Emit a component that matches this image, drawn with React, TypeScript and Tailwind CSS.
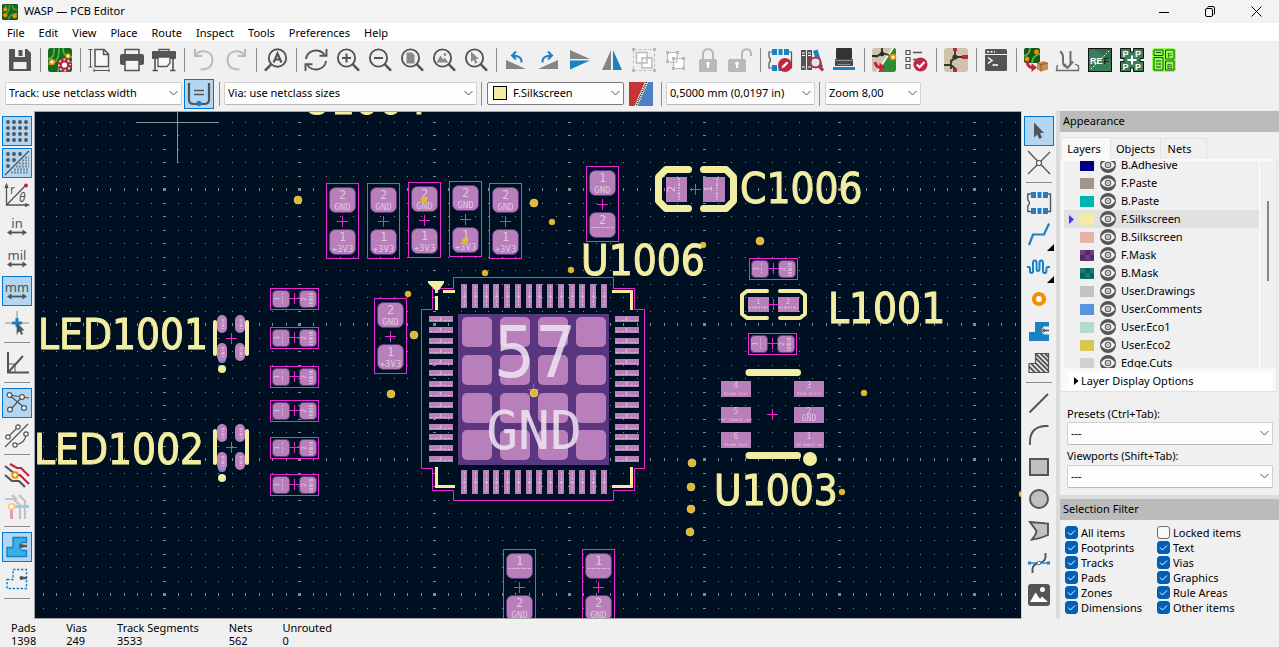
import React from "react";

const DARK = "#545454";
const BLUE = "#1a81c4";
const RED = "#bf2641";
const OFF = "#b9b9b9";

function Svg({ children, size = 24 }: { children: React.ReactNode; size?: number }) {
  return (
    <svg className="overflow-visible" width={size} height={size} viewBox={`0 0 ${size} ${size}`} fill="none" aria-hidden="true">
      {children}
    </svg>
  );
}

const lens = (
  <>
    <circle cx="10.5" cy="10" r="8.6" stroke={DARK} strokeWidth="1.9" />
    <path d="M16.6 16.2 L23 22.6" stroke={DARK} strokeWidth="2.6" />
  </>
);

const board = (
  <>
    <rect width="24" height="24" rx="2.5" fill="#17691f" />
    <path d="M0 11 C6 10 6 6 6 0 M0 16 C9 16 11 10 11 0 M24 9 C17 9 15 6 15 0 M10 24 C10 17 15 14 24 14" stroke="#4fae3e" strokeWidth="1.8" />
  </>
);

const pads6 = (
  <path d="M4 1h5v6H4z M10.5 1h4v6h-4z M16 1h5v6h-5z M4 17h5v6H4z M10.5 17h4v6h-4z M16 17h5v6h-5z" fill={BLUE} />
);

const bentArrow = (
  <path d="M3 14 Q4 19.5 8.5 19.5" stroke={RED} strokeWidth="3" />
);

const icons: Record<string, React.ReactNode> = {
  save: (
    <path fillRule="evenodd" fill={DARK} d="M1.5 1 H19 L23 5 V23 H1 V2 Q1 1 1.5 1 Z M5.5 14 V21 H18.5 V14 Z M7 1 V9 H17 V1 Z M10.5 2 H14.5 V8 H10.5 Z" />
  ),
  boardSetup: (
    <>
      {board}
      <circle cx="4" cy="14" r="2.4" fill="#fff" stroke="#f29100" strokeWidth="1.8" />
      <circle cx="20" cy="8" r="2" fill="#fff" stroke="#f29100" strokeWidth="1.6" />
      <circle cx="16.500" cy="17" r="6.600" fill="#efefef" />
      <circle cx="16.500" cy="17" r="5.400" stroke={RED} strokeWidth="2.800" strokeDasharray="2.600 1.640" />
      <circle cx="16.500" cy="17" r="3.700" stroke={RED} strokeWidth="2.200" fill="#fff" />
    </>
  ),
  page: (
    <>
      <path d="M7 1.5 H16 L20.5 6 V18.5 H7 Z M15.5 1.5 V6.5 H20.5" stroke={DARK} strokeWidth="1.5" fill="#f8f8f8" />
      <path d="M2.5 1.5 V19 M0.5 1.5 H4.5 M0.5 19 H4.5 M6 22.5 H21 M6 20.5 V24 M21 20.5 V24" stroke={DARK} />
    </>
  ),
  print: (
    <>
      <path d="M5 6 V1.5 H19 V6" stroke={DARK} strokeWidth="1.5" />
      <rect y="6" width="24" height="11" rx="2" fill={DARK} />
      <path d="M5 12 H19 V22.5 H5 Z" fill="#f4f4f4" stroke={DARK} strokeWidth="1.5" />
      <path d="M3 11.5 H21" stroke={DARK} strokeWidth="2" />
    </>
  ),
  plot: (
    <>
      <path d="M7 5 V1.5 H17 V5" stroke={DARK} strokeWidth="1.3" />
      <rect y="3" width="24" height="8" rx="1" fill={DARK} />
      <path d="M6 9 H18 V15 L15 18.5 H6 Z" fill="#f8f8f8" stroke={DARK} strokeWidth="1.3" />
      <path d="M3 11 V22 M21 11 V22 M0.5 22.5 H6 M18 22.5 H23.5" stroke={DARK} strokeWidth="1.6" />
    </>
  ),
  undo: (
    <path d="M3 1 V8 H10 M3.3 7.5 C9 0 21 3 20.5 12.500 C20 18.500 16.5 22 8.500 21.5" stroke={OFF} strokeWidth="2" />
  ),
  redo: (
    <path d="M21 1 V8 H14 M20.700 7.5 C15 0 3 3 3.5 12.500 C4 18.500 7.500 22 15.500 21.5" stroke={OFF} strokeWidth="2" />
  ),
  find: (
    <>
      <circle cx="13.5" cy="10" r="8.7" stroke={DARK} strokeWidth="1.9" />
      <path d="M7.4 16.2 L1 22.6" stroke={DARK} strokeWidth="2.6" />
      <path d="M9.6 14.5 L13.5 5.5 L17.4 14.5 M11 11.5 H16" stroke={DARK} strokeWidth="2.2" />
    </>
  ),
  refresh: (
    <path d="M2 11 C3 3 14 -1 20.5 6.5 M22.5 1 V7.8 H15.5 M22 13 C21 21 10 25 3.5 17.5 M1.5 23 V16.2 H8.5" stroke={DARK} strokeWidth="1.9" />
  ),
  zoomIn: <>{lens}<path d="M10.5 5.5 V14.5 M6 10 H15" stroke={DARK} strokeWidth="2" /></>,
  zoomOut: <>{lens}<path d="M6 10 H15" stroke={DARK} strokeWidth="2" /></>,
  zoomFit: <>{lens}<path d="M6.5 4.5 H12 L14.5 7 V15.5 H6.5 Z" fill="#8a8a8a" /></>,
  zoomObj: (
    <>
      {lens}
      <path d="M4.5 14.5 L8.5 7.5 L11 11.5 L12.5 9.5 L16.5 14.5 Z" fill="#8a8a8a" />
      <circle cx="13" cy="6.5" r="1.4" fill="#8a8a8a" />
    </>
  ),
  zoomSel: <>{lens}<path d="M7 3.5 V14 L9.6 11.8 L11.4 15.8 L13.4 14.8 L11.6 11 H15 Z" fill="#8a8a8a" /></>,
  rotL: (
    <>
      <path d="M2 12 L22 21 H2 Z" fill="#858585" />
      <path d="M17.500 14.500 Q18 7.500 8.5 7.500 M12 3.5 L8 7.5 L12 11.5" stroke={BLUE} strokeWidth="2" />
    </>
  ),
  rotR: (
    <>
      <path d="M22 12 L2 21 H22 Z" fill="#858585" />
      <path d="M6.500 14.500 Q6 7.500 15.5 7.500 M12 3.5 L16 7.5 L12 11.5" stroke={BLUE} strokeWidth="2" />
    </>
  ),
  flipV: (
    <>
      <path d="M2 2 L22 11 H2 Z" fill="#858585" />
      <path d="M2 21.5 L22 12.5 H2 Z" fill={BLUE} />
    </>
  ),
  flipH: (
    <>
      <path d="M2 22 L11 2 V22 Z" fill="#858585" />
      <path d="M22 22 L13 2 V22 Z" fill={BLUE} />
    </>
  ),
  group: (
    <>
      <rect x="1.5" y="1.5" width="21" height="21" stroke={OFF} strokeDasharray="3 2" />
      <path d="M0 0h3v3H0z M21 0h3v3h-3z M0 21h3v3H0z M21 21h3v3h-3z" fill={OFF} />
      <path d="M4.500 4.500 H15 V15 H4.500 Z M10 10 H20 V20 H10 Z" fill="#fff" stroke={OFF} strokeWidth="1.4" />
    </>
  ),
  ungroup: (
    <>
      <path d="M3.500 4.500 H13 V14 H3.500 Z M9.500 10.500 H20 V20.500 H9.500 Z" fill="#fff" stroke={OFF} strokeWidth="1.2" />
      <path d="M2 3h3v3H2z M12 3h3v3h-3z M2 12h3v3H2z M8 9h3v3H8z M18 9h3v3h-3z M8 19h3v3H8z M18 19h3v3h-3z" fill={OFF} />
    </>
  ),
  lock: (
    <>
      <path d="M7 12 V6 Q7 1.200 12 1.200 T17 6 V12" stroke={OFF} strokeWidth="2" />
      <rect x="3" y="11" width="18" height="13" rx="1.5" fill={OFF} />
      <path d="M12 14.500 V20" stroke="#fff" strokeWidth="2" />
      <circle cx="12" cy="15.500" r="1.800" fill="#fff" />
    </>
  ),
  unlock: (
    <>
      <path d="M14 12 V6 Q14 1.200 18.500 1.200 T23 6 V8" stroke={OFF} strokeWidth="2" />
      <rect x="0" y="11" width="18" height="13" rx="1.5" fill={OFF} />
      <path d="M9 14.500 V20" stroke="#fff" strokeWidth="2" />
      <circle cx="9" cy="15.500" r="1.800" fill="#fff" />
    </>
  ),
  fpEdit: (
    <>
      <path d="M4 4 H1 V9 Q4 12 1 15 V20 H4 M21 4 H23.500 V20 H21" stroke={DARK} strokeWidth="1.200" />
      {pads6}
      <circle cx="17" cy="17" r="7" fill={RED} />
      <path d="M13.500 20.500 L14.500 17.500 L19 13.500 L20.500 15 L16 19.500 Z" fill="#fff" />
    </>
  ),
  fpBrowse: (
    <>
      <path d="M1 2 H6 V22 H1 Z M7 2 H12 V22 H7 Z" fill={DARK} />
      <path d="M2 5 H5 M2 7.500 H5 M8 5 H11 M8 7.500 H11 M2 19 H5 M8 19 H11" stroke="#fff" />
      <path d="M13 3 L17.500 1.500 L23 19 L19 20.500 Z" fill={BLUE} />
      <circle cx="15.500" cy="14.500" r="5" fill="#dceaf4" stroke={RED} strokeWidth="2" />
      <path d="M19 18 L23 22.500" stroke={RED} strokeWidth="3" />
    </>
  ),
  viewer3d: (
    <>
      <rect x="4" y="0" width="16" height="11" rx="1" fill="#333" />
      <path d="M3 11 H21 V18 H3 Z" fill="#4a4a4a" />
      <path d="M3 12.500 H21 M6 16.500 H18" stroke="#8c8c8c" />
      <path d="M1 20.500 H23" stroke={BLUE} strokeWidth="3" />
    </>
  ),
  updatePcb: (
    <>
      <rect width="24" height="24" rx="3" fill="#cfc3ab" />
      <path d="M22 0 Q24 0 24 3 V21 Q24 24 21 24 H5 Z" fill="#2f8a35" />
      <path d="M21 0 L5 24" stroke="#fff" strokeWidth="1.500" />
      <path d="M10 0 V5 L4 9 M10 5 L17 7 M5 8 H0" stroke="#2a2a2a" strokeWidth="1.800" />
      <circle cx="10" cy="6" r="2.300" fill="#2a2a2a" />
      <circle cx="21" cy="9" r="2.400" fill="#fff" stroke="#f29100" strokeWidth="1.800" />
      {bentArrow}
      <path d="M7.500 14.500 L13.500 19.500 L7.500 24 Z" fill={RED} />
    </>
  ),
  drc: (
    <>
      <path d="M2 2.500 H6 V6.500 H2 Z M2 9.500 H6 V13.500 H2 Z M2 16.500 H6 V20.500 H2 Z" stroke={DARK} strokeWidth="1.200" />
      <path d="M9 4.500 H18 M9 11.500 H13" stroke={DARK} strokeWidth="1.500" />
      <circle cx="16.500" cy="16.500" r="7" fill={RED} />
      <path d="M12.800 16.500 L15.500 19.200 L20.500 14" stroke="#fff" strokeWidth="2.200" />
    </>
  ),
  schematic: (
    <>
      <rect width="24" height="24" rx="3" fill="#cfc3ab" />
      <path d="M11 0 V3 M24 9 H18 M11 20 V24" stroke={RED} strokeWidth="4" />
      <path d="M11 3 V9 M18 9 H11 M11 9.500 L7 13.500 M0 17 H7 M7 11.500 V21 M7 17 L11 20.500" stroke="#333" strokeWidth="1.800" />
      <circle cx="11" cy="9" r="2.600" fill="#333" />
    </>
  ),
  console: (
    <>
      <rect x="1" y="1" width="22" height="22" rx="1.500" fill={DARK} />
      <path d="M1 6.500 H23" stroke="#efefef" />
      <path d="M3 3.700 H5 M6.500 3.700 H8.500 M10 3.700 H11" stroke="#fff" strokeWidth="1.400" />
      <path d="M4 9.500 L8 12.500 L4 15.500 M8.500 17 H14" stroke="#fff" strokeWidth="1.500" />
    </>
  ),
  archive: (
    <>
      <rect width="16" height="15" rx="2" fill="#14561a" />
      <path d="M6 0 Q6 6 0 8 M16 6 Q9 7 8 15" stroke="#4fae3e" strokeWidth="2" />
      <circle cx="3" cy="11" r="2.400" fill="#f29100" />
      <circle cx="12.500" cy="4" r="2.400" fill="#f29100" />
      {bentArrow}
      <path d="M7.500 15 L13 19.500 L7.500 24 Z" fill={RED} />
      <path d="M13 15 L20 13 L24 15 V21.500 L17 23.500 L13 21.500 Z" fill="#c98d4e" />
      <path d="M13 15 L17 16.500 L24 15 M17 16.500 V23.500" stroke="#8d5c2a" />
    </>
  ),
  teardrop: (
    <>
      <path d="M4 3.500 Q7 5 7 9 V14 Q7.500 19 11 19 T14.500 14 V3 M8.500 16 L11.500 20 L17 13.500" stroke="#6d6d6d" strokeWidth="2" />
      <path d="M1.500 17 L0.500 22.500 H22.500 V18 L19 16" stroke="#6d6d6d" strokeWidth="1.400" />
    </>
  ),
  ref: (
    <>
      <rect x="0.500" y="0.500" width="23" height="23" fill="#3a7d5a" stroke="#111" />
      <path d="M6 1 L23 1 V12 Z" fill="#2f6b4c" />
      <path d="M3 21 L22 2" stroke="#fff" strokeDasharray="1.500 1.500" />
      <text x="2" y="16" fontSize="9" fontWeight="700" fontFamily="Liberation Sans, sans-serif" fill="#fff">RE</text>
      <text x="15.500" y="16" fontSize="9" fontWeight="700" fontFamily="Liberation Sans, sans-serif" fill="#16241c">F</text>
    </>
  ),
  pppp: (
    <>
      <path d="M0.500 0.500 H10.500 V4 H13.500 V0.500 H23.500 V10.500 H20 V13.500 H23.500 V23.500 H13.500 V20 H10.500 V23.500 H0.500 V13.500 H4 V10.500 H0.500 Z" fill="#3a7d5a" stroke="#111" />
      <path d="M12 7.500 V16.500 M7.500 12 H16.500" stroke="#fff" strokeWidth="2" />
      <g fontSize="9" fontWeight="700" fontFamily="Liberation Sans, sans-serif" fill="#fff">
        <text x="2.500" y="8.500">P</text>
        <text x="15" y="8.500">P</text>
        <text x="2.500" y="21.500">P</text>
        <text x="15" y="21.500">P</text>
      </g>
    </>
  ),
  fb: (
    <>
      <rect x="0" y="0" width="24" height="24" rx="3" fill="#8fff4f" />
      <path d="M2 2 H11 V7.500 H2 Z M2 9.500 H11 V22 H2 Z M13.500 2 H22 V11 H13.500 Z M13.500 13 H22 V22 H13.500 Z M4 4.500 H9 M4 13 H9 M4 16 H9 M4 19 H9" stroke="#24431a" />
      <g fontSize="8" fontFamily="Liberation Sans, sans-serif" fill="#24431a">
        <text x="15.500" y="9.500">F</text>
        <text x="15" y="20.500">B</text>
      </g>
    </>
  ),
  autoTrack: (
    <>
      <path d="M2 1 V18 Q2 22 7 22 H17 Q22 22 22 18 V1" stroke={DARK} strokeWidth="2.200" />
      <path d="M7 8.500 H17 M7 12.500 H17" stroke={DARK} strokeWidth="1.400" />
      <circle cx="12" cy="21.500" r="2.700" fill={BLUE} />
    </>
  ),
  layerPair: (
    <>
      <path d="M0 0 H16 L6 24 H0 Z" fill="#c83434" />
      <path d="M19 0 H24 V24 H8 Z" fill="#4d7fc4" />
      <path d="M17.500 0 L7 24" stroke="#fff" strokeWidth="3" />
      <path d="M17.500 0 L7 24" stroke="#222" strokeWidth="2" strokeDasharray="1 1" />
    </>
  ),
  grid: (
    <g fill={DARK}>
      {[3, 9, 15, 21].map((y) => [3, 9, 15, 21].map((x) => <circle key={`${x}-${y}`} cx={x} cy={y} r="1.900" />))}
    </g>
  ),
  gridOver: (
    <>
      <g fill={DARK}>
        {[[3, 3], [9, 3], [15, 3], [3, 9], [9, 9], [3, 15]].map(([x, y]) => <circle key={`${x}-${y}`} cx={x} cy={y} r="1.900" />)}
      </g>
      <path d="M0 24 L24 0" stroke={DARK} strokeWidth="1.200" />
      <path d="M20 6.500 H24 M17 9.500 H24 M14 12.500 H24 M11 15.500 H24 M9 18.500 H24 M6 21.500 H24" stroke="#7d8a96" strokeWidth="2" strokeDasharray="2 1" />
    </>
  ),
  polar: (
    <>
      <path d="M1.500 2 V22 H23 M0 5 L1.500 1.500 L3 5 M20 20.500 L23.500 22 L20 23.500 M1.500 22 L20 3" stroke={DARK} strokeWidth="1.300" />
      <circle cx="21" cy="2.500" r="2" fill={RED} />
      <text x="5" y="11" fontSize="12" fontFamily="Noto Sans, sans-serif" fill={DARK}>r</text>
      <text x="14" y="19" fontSize="12" fontStyle="italic" fontFamily="Noto Sans, sans-serif" fill={DARK}>θ</text>
    </>
  ),
  cursor: (
    <>
      <path d="M12 0 V24 M0 12 H24" stroke="#8a8a8a" />
      <path d="M12 7 V16 M7 12 H17" stroke={BLUE} strokeWidth="3" />
      <path d="M12 11.500 V22.500 L14.500 20.500 L16.500 24 L18 23 L16.500 19.500 H19.500 Z" fill={DARK} />
    </>
  ),
  angle45: (
    <>
      <path d="M3 1 V21.500 H24 M3 21.500 L18 5" stroke={DARK} strokeWidth="2" />
      <path d="M3 13 H10 V21" stroke={DARK} />
    </>
  ),
  ratsnest: (
    <>
      <path d="M4 4 L20 17 M4 4 L17 6 L24 7 M17 6 L5 19" stroke={DARK} strokeWidth="1.200" />
      <g fill="#fff" stroke={DARK} strokeWidth="1.200">
        <circle cx="4.500" cy="4" r="2.400" /><circle cx="17" cy="6" r="2.400" /><circle cx="5" cy="18.500" r="2.400" /><circle cx="19" cy="17" r="2.400" />
      </g>
    </>
  ),
  ratsCurve: (
    <>
      <path d="M0 24 L23 1 M3 14 L13 4 M10 22 Q21 20 21 11" stroke={DARK} strokeWidth="1.200" />
      <g fill="#fff" stroke={DARK} strokeWidth="1.200">
        <circle cx="3" cy="14" r="2.200" /><circle cx="13" cy="4" r="2.200" /><circle cx="10" cy="22" r="2.200" /><circle cx="21" cy="11" r="2.200" />
      </g>
    </>
  ),
  netHi: (
    <>
      <path d="M5 1 L12 5 H16 L24 13 M11 12 H15 L24 21" stroke={RED} strokeWidth="2.200" />
      <path d="M0 3 L10 11 M0 12 L7 18 H14 L20 24" stroke={DARK} strokeWidth="2.200" />
      <circle cx="10" cy="12" r="2.800" fill="#fff" stroke="#f29100" strokeWidth="2" />
    </>
  ),
  trackDim: (
    <>
      <path d="M0 4 H8 L15 10 V24 M14 0 L20 6 V24 M7 0 L12 5" stroke="#c2c2c2" strokeWidth="2.200" />
      <path d="M8 11.500 H24" stroke="#9ccbe8" strokeWidth="3" />
      <path d="M6.500 14 V24" stroke="#e3a0ac" strokeWidth="3" />
      <circle cx="6.500" cy="11.500" r="2.800" fill="#fff" stroke="#f9cf90" strokeWidth="2" />
    </>
  ),
  zoneFill: (
    <>
      <path d="M2 12.500 H8 V2.500 H21.500 V7.500 H17 A4.500 4.500 0 0 0 17 15.500 H21.500 V21.500 H2 Z" fill="#38b0ea" stroke={BLUE} strokeWidth="1.400" />
      <path d="M15 11 H22" stroke={DARK} strokeWidth="2.400" />
      <circle cx="16.500" cy="11" r="2" fill={DARK} />
    </>
  ),
  zoneLine: (
    <>
      <path d="M2 12.500 H8 V2.500 H21.500 V21.500 H2 Z" stroke={BLUE} strokeWidth="1.400" strokeDasharray="2.500 1.500" />
      <path d="M15 11 H22" stroke={DARK} strokeWidth="2.400" />
      <circle cx="16.500" cy="11" r="2" fill={DARK} />
    </>
  ),
  select: <path d="M7 3.500 V18.500 L10 15.500 L12.500 20 L15 18.500 L13 14 H17 Z" fill={DARK} />,
  localRats: (
    <>
      <path d="M1 0 L23 23 M23 1 L1 23" stroke={DARK} strokeWidth="1.300" />
      <circle cx="12" cy="12" r="2.500" fill="#fff" stroke={DARK} strokeWidth="1.200" />
    </>
  ),
  footprint: (
    <>
      <path d="M4 3 H0.800 V9 Q4 12 0.800 15 V20.500 H4 M21 3 H23.500 V20.500 H21" stroke={DARK} strokeWidth="1.400" />
      {pads6}
    </>
  ),
  route: <path d="M2 22 L6 11.500 H17 L22 0.500" stroke={BLUE} strokeWidth="2.200" />,
  tune: <path d="M0 12 H2 Q3 12 3 14 V16 Q3 18 4.500 18 T6 16 V8 Q6 5.500 7.800 5.500 T9.600 8 V14 Q9.600 16 11 16 T12.500 14 V8 Q12.500 5.500 14.200 5.500 T16 8 V16 Q16 18 17.700 18 T19.400 16 V14 Q19.400 12 21 12 H23" stroke={BLUE} strokeWidth="2" />,
  via: <circle cx="12" cy="12" r="5" fill="#fff" stroke="#f29100" strokeWidth="4.200" />,
  zone: (
    <>
      <path d="M2 13 H8 V3 H22 V7.500 H17 A4.500 4.500 0 0 0 17 15.500 H22 V22 H2 Z" fill={BLUE} />
      <path d="M16 11.500 H22" stroke={DARK} strokeWidth="1.600" />
      <circle cx="16.500" cy="11.500" r="1.500" stroke={DARK} />
    </>
  ),
  ruleArea: (
    <>
      <path d="M2 12.500 H8.500 V2.500 H21.500 V21.500 H2 Z" stroke={DARK} strokeWidth="1.200" />
      <path d="M8.500 2.500 L21.500 15.500 M13.500 2.500 L21.500 10.500 M18 2.500 L21.500 6 M8.500 7 L21.500 20 M8.500 12 L18 21.500 M4 12.500 L13 21.500 M2 15.500 L8 21.500" stroke={DARK} strokeWidth="1.800" />
    </>
  ),
  line: <path d="M2.500 21.500 L21 3" stroke={DARK} strokeWidth="1.900" />,
  arc: <path d="M3 22 V19 Q3 4 18 3 H21.500" stroke={DARK} strokeWidth="1.900" />,
  rect: <rect x="3" y="4" width="18" height="16" fill="#c0c0c0" stroke={DARK} strokeWidth="2" />,
  circle: <circle cx="12" cy="12" r="9" fill="#c0c0c0" stroke={DARK} strokeWidth="2" />,
  polygon: <path d="M3 3 L21 4.500 V16 Q12 20 5 20.500 Q9 16 9.500 12 Z" fill="#c0c0c0" stroke={DARK} strokeWidth="1.900" />,
  bezier: (
    <>
      <path d="M5.500 22 V18 Q6 13 12 12 T18.500 6 V2" stroke={DARK} strokeWidth="1.900" />
      <path d="M2 12 H22" stroke={BLUE} strokeWidth="1.400" />
      <path d="M1 10.500h3v3H1z M20 10.500h3v3h-3z" fill={BLUE} />
      <circle cx="12" cy="12" r="1.800" fill="#fff" stroke={BLUE} />
    </>
  ),
  image: (
    <>
      <rect x="1" y="1" width="22" height="22" rx="3" fill={DARK} />
      <circle cx="15.500" cy="6.500" r="2.500" fill="#fff" />
      <path d="M3 19 L8.500 9.500 L13 16 L15 13.500 L21 19 Z" fill="#fff" />
    </>
  ),
};

function unitIcon(label: string) {
  return (
    <>
      <text x="12" y="13" fontSize="13" textAnchor="middle" fontFamily="Noto Sans, sans-serif" fill={DARK}>{label}</text>
      <path d="M4 17.500 H20" stroke={DARK} strokeWidth="1.800" />
      <path d="M6.500 14.500 L2 17.500 L6.500 20.500 Z M17.500 14.500 L22 17.500 L17.500 20.500 Z" fill={DARK} />
    </>
  );
}
icons.inch = unitIcon("in");
icons.mil = unitIcon("mil");
icons.mm = unitIcon("mm");

type Tool = [string, string, boolean?];

const mainTools: (Tool | null)[] = [
  ["save", "Save"], null, ["boardSetup", "Board setup"], null,
  ["page", "Page settings"], ["print", "Print"], ["plot", "Plot"], null,
  ["undo", "Undo"], ["redo", "Redo"], null, ["find", "Find"], null,
  ["refresh", "Refresh"], ["zoomIn", "Zoom in"], ["zoomOut", "Zoom out"], ["zoomFit", "Zoom to fit"], ["zoomObj", "Zoom to objects"], ["zoomSel", "Zoom to selection"], null,
  ["rotL", "Rotate counterclockwise"], ["rotR", "Rotate clockwise"], ["flipV", "Mirror vertically"], ["flipH", "Mirror horizontally"],
  ["group", "Group"], ["ungroup", "Ungroup"], ["lock", "Lock"], ["unlock", "Unlock"], null,
  ["fpEdit", "Footprint editor"], ["fpBrowse", "Footprint browser"], ["viewer3d", "3D viewer"], null,
  ["updatePcb", "Update PCB from schematic"], ["drc", "Design rules checker"], null,
  ["schematic", "Open schematic"], null, ["console", "Scripting console"], null,
  ["archive", "Archive project"], ["teardrop", "Teardrops"], ["ref", "Reference labels"], ["pppp", "Panelize"], ["fb", "Interactive BOM"],
];

const leftTools: (Tool | null)[] = [
  ["grid", "Show grid", true], ["gridOver", "Grid overrides", true], ["polar", "Polar coordinates"], ["inch", "Inches"], ["mil", "Mils"], ["mm", "Millimeters", true], ["cursor", "Full crosshair"], null,
  ["angle45", "Constrain angle"], null,
  ["ratsnest", "Show ratsnest", true], ["ratsCurve", "Curved ratsnest"], null,
  ["netHi", "Net highlighting"], ["trackDim", "Inactive layers"], null,
  ["zoneFill", "Show filled zones", true], ["zoneLine", "Show zone outlines"], null,
];

const rightTools: (Tool | null)[] = [
  ["select", "Select", true], ["localRats", "Local ratsnest"], null,
  ["footprint", "Place footprint"], ["route", "Route tracks"], ["tune", "Tune length"], ["via", "Place via"], ["zone", "Draw zone"], ["ruleArea", "Draw rule area"], null,
  ["line", "Draw line"], ["arc", "Draw arc"], ["rect", "Draw rectangle"], ["circle", "Draw circle"], ["polygon", "Draw polygon"], ["bezier", "Draw Bezier curve"], ["image", "Place image"],
];

function ToolButton({ tool }: { tool: Tool }) {
  const [icon, label, active] = tool;
  const more = icon === "route" || icon === "tune";
  return (
    <button
      type="button"
      title={label}
      aria-label={label}
      aria-pressed={!!active}
      className={`relative m-px grid size-[30px] shrink-0 place-items-center border ${active ? "border-[#0078d4] bg-[#b3d6f3]" : "border-transparent"}`}
    >
      <Svg>{icons[icon]}</Svg>
      {more && <span className="absolute -right-px -bottom-0.5 size-0 border-b-[7px] border-l-[7px] border-b-black border-l-transparent" />}
    </button>
  );
}

function VSep() {
  return (
    <div className="flex h-6 w-2 shrink-0 justify-center">
      <span className="h-full w-px bg-[#8c8c8c]" />
    </div>
  );
}

function ToolColumn({ tools }: { tools: (Tool | null)[] }) {
  return (
    <div className="flex shrink-0 flex-col items-center pt-1">
      {tools.map((t, i) =>
        t ? <ToolButton key={i} tool={t} /> : <div key={i} className="mt-[3px] mb-1 h-px w-[26px] bg-[#8c8c8c]" />
      )}
    </div>
  );
}

function Combo({ label, value, className, swatch, strong }: { label: string; value: string; className?: string; swatch?: string; strong?: boolean }) {
  return (
    <div className={`relative shrink-0 ${className ?? ""}`}>
      <select
        aria-label={label}
        defaultValue={value}
        className={`block h-[23px] w-full appearance-none rounded-[2px] border bg-[#fdfdfd] pr-5 text-[11px] ${strong ? "border-[#7a7a7a]" : "border-[#d0d0d0] border-b-[#b8b8b8]"} ${swatch ? "pl-[25px]" : "pl-[3px]"}`}
      >
        <option>{value}</option>
      </select>
      {swatch && <span className={`pointer-events-none absolute top-1 left-1.5 size-[14px] border border-black ${swatch}`} />}
      <svg className="pointer-events-none absolute top-2 right-1" width="9" height="7" viewBox="0 0 9 7" fill="none">
        <path d="M0.5 1 L4.500 5 L8.500 1" stroke="#555" />
      </svg>
    </div>
  );
}

const MASK = "#5a3580";
const PAD = "#b97fbb";
const EDGE = "#ec27d8";
const SILK = "#f2eda1";
const GOLD = "#e3b72e";
const INK = "#ead9ec";
const MONO = "DejaVu Sans Mono, monospace";

function Cross({ x, y }: { x: number; y: number }) {
  return <path d={`M${x - 5} ${y + 0.5} h11 M${x + 0.5} ${y - 5} v11`} stroke={EDGE} />;
}

function TwoPadV({ x, y, top, bottom }: { x: number; y: number; top: [string, string]; bottom: [string, string] }) {
  return (
    <g>
      <rect x={x - 15.5} y={y - 37.5} width="32" height="75" stroke={EDGE} />
      {[y - 34, y + 8].map((py) => (
        <rect key={py} x={x - 12.5} y={py + 0.5} width="26" height="25" rx="6" fill={PAD} stroke={MASK} />
      ))}
      <Cross x={x} y={y} />
      <g fill={INK} fontFamily={MONO} textAnchor="middle" opacity="0.8">
        <text x={x + 0.5} y={y - 22} fontSize="12">{top[0]}</text>
        <text x={x + 0.5} y={y + 20} fontSize="12">{bottom[0]}</text>
        {top[1] ? <text x={x + 0.5} y={y - 11} fontSize="9">{top[1]}</text> : null}
        {bottom[1] ? <text x={x + 0.5} y={y + 31} fontSize="9">{bottom[1]}</text> : null}
      </g>
      {!top[1] && <path d={`M${x - 11} ${y - 18.5} h24`} stroke={INK} strokeDasharray="3 1 5 1" opacity="0.6" />}
      {!bottom[1] && <path d={`M${x - 11} ${y + 23.5} h24`} stroke={INK} strokeDasharray="3 1 5 1" opacity="0.6" />}
    </g>
  );
}

function Speckle({ d, width = 2 }: { d: string; width?: number }) {
  return <path d={d} stroke={INK} strokeWidth={width} strokeDasharray="2 1 1 1 3 1" opacity="0.55" />;
}

function TwoPadH({ x, y }: { x: number; y: number }) {
  return (
    <g>
      <rect x={x - 23.5} y={y - 10.5} width="48" height="21" stroke={EDGE} />
      {[x - 22, x + 5].map((px) => (
        <rect key={px} x={px + 0.5} y={y - 8.5} width="17" height="17" rx="4" fill={PAD} stroke={MASK} />
      ))}
      <Cross x={x} y={y - 1} />
      <g fill={INK} fontFamily={MONO} fontSize="7" textAnchor="middle" opacity="0.75">
        <text transform={`translate(${x - 15} ${y}) rotate(-90)`}>1</text>
        <text transform={`translate(${x + 12} ${y}) rotate(-90)`}>2</text>
      </g>
      <Speckle d={`M${x - 11.5} ${y - 6} v12`} width={1} />
      <Speckle d={`M${x + 17} ${y - 6} v13`} width={4} />
    </g>
  );
}

function Led({ y }: { y: number }) {
  return (
    <g>
      <circle cx="222" cy={y + 21} r="4" fill="#5a93df" />
      {[217, 235].map((x) => [y - 23, y + 5].map((py) => (
        <g key={`${x}-${py}`}>
          <rect x={x} y={py} width="10" height="18" rx="5" fill={PAD} />
          <Speckle d={`M${x + 6} ${py + 4} v10`} width={3} />
        </g>
      )))}
      <path d={`M215 ${y - 16} V${y + 16} M247 ${y - 16} V${y + 16}`} stroke={SILK} strokeWidth="4" strokeLinecap="round" />
      <circle cx="222" cy={y + 31} r="4" fill={SILK} />
      <Cross x={231} y={y} />
    </g>
  );
}

const pinSteps = Array.from({ length: 14 }, (_, i) => Math.round(i * 10.77));

function Qfn() {
  return (
    <g>
      <path d="M421.5 309.5 H432.5 V288.5 H453.5 V277.5 H613.5 V288.5 H634.5 V309.5 H644.5 V468.5 H634.5 V490.500 H613.5 V500.500 H453.5 V490.500 H432.5 V468.5 H421.5 Z" stroke={EDGE} />
      {pinSteps.map((s) => (
        <g key={s}>
          <rect x={461 + s} y="284" width="6" height="24" fill={PAD} />
          <rect x={461 + s} y="470" width="6" height="24" fill={PAD} />
          <rect x="429" y={316 + s} width="24" height="6" fill={PAD} />
          <rect x="615" y={316 + s} width="24" height="6" fill={PAD} />
          <Speckle d={`M${464.5 + s} 286 v20`} width={1} />
          <Speckle d={`M${464.5 + s} 472 v20`} width={1} />
          <Speckle d={`M430 ${320.5 + s} h22`} width={1} />
          <Speckle d={`M616 ${320.5 + s} h22`} width={1} />
          <path d={`M463 ${296.5} m${s} 0 h3 M${463 + s} 482.5 h3 M440.5 ${317 + s} v3 M626.5 ${317 + s} v3`} stroke={INK} strokeWidth="1.5" opacity="0.6" />
        </g>
      ))}
      <rect x="458" y="314" width="151" height="151" fill={MASK} />
      {[317, 355, 393, 430].map((y) => [462, 500, 538, 576].map((x) => (
        <rect key={`${x}-${y}`} x={x} y={y} width="30" height="30" rx="5" fill={PAD} />
      )))}
      <g fill="#f0e6f2" opacity="0.86" textAnchor="middle">
        <text x="535" y="377" fontSize="72" fontFamily="DejaVu Sans Condensed, DejaVu Sans, sans-serif">57</text>
        <text x="534" y="449" fontSize="53" fontFamily={MONO}>GND</text>
      </g>
      <path d="M428 281 H444 V283 L439 290 H438 V293 H435 V290 L428 283 Z" fill={SILK} />
      <path d="M443 291.5 H455 M436.500 296 V310 M612 291.500 H631.500 V310 M631.500 467 V486.500 H612 M436.500 467 V486.500 H455" stroke={SILK} strokeWidth="3" />
      <Cross x={533} y={389} />
    </g>
  );
}

const vias: [number, number, number][] = [
  [298, 200, 4], [534, 203, 4], [424, 200, 3], [465, 241, 3], [485, 273, 3], [408, 294, 3], [414, 335, 4], [391, 394, 4],
  [552, 222, 3], [571, 270, 3], [703, 245, 3], [760, 241, 4], [864, 393, 3], [692, 463, 4], [691, 487, 4], [691, 509, 4],
  [690, 532, 4], [842, 492, 3], [1022, 494, 3], [534, 393, 4],
];

const refs: [string, number, number][] = [
  ["U1004", 303, 114], ["LED1001", 38, 349], ["LED1002", 34, 464], ["C1006", 740, 203], ["U1006", 581, 275], ["L1001", 828, 323], ["U1003", 714, 505],
];

const u1003: [string, number, number, string][] = [
  ["4", 721, 381, "Stemm ejet"], ["5", 721, 407, "net (mount on)"], ["6", 721, 432, "Stemm ejet"],
  ["3", 794, 381, "Stem djust"], ["2", 794, 407, "GND"], ["1", 794, 432, "Vd mount on"],
];

const steps = [0, 14, 27, 41, 54, 68, 81, 95, 108, 122];

function Board() {
  return (
    <svg className="absolute inset-0 size-full" fill="none" role="img" aria-label="Board canvas">
      <defs>
        <pattern id="grid" x="128" y="76" width="135" height="135" patternUnits="userSpaceOnUse">
          <g fill="#848a8e">
            {steps.map((y) => steps.map((x) => (
              <rect
                key={`${x}-${y}`}
                x={x === 0 ? 0 : x + 1}
                y={y === 0 ? 0 : y + 1}
                width={x === 0 ? 3 : 1}
                height={y === 0 ? 3 : 1}
              />
            )))}
          </g>
        </pattern>
      </defs>
      <rect width="100%" height="100%" fill="#001023" />
      <rect width="100%" height="100%" fill="url(#grid)" />
      <g transform="translate(-35 -112)">
        <path d="M136 122.500 H218 M177.500 112 V163" stroke="#8b949b" />
        <TwoPadV x={342} y={221} top={["2", "GND"]} bottom={["1", "+3V3"]} />
        <TwoPadV x={383} y={221} top={["2", "GND"]} bottom={["1", "+3V3"]} />
        <TwoPadV x={424} y={220} top={["2", "GND"]} bottom={["1", "+3V3"]} />
        <TwoPadV x={465} y={219} top={["2", "GND"]} bottom={["1", "+3V3"]} />
        <TwoPadV x={505} y={221} top={["2", "GND"]} bottom={["1", "+3V3"]} />
        <TwoPadV x={390} y={336} top={["2", "GND"]} bottom={["1", "+3V3"]} />
        <TwoPadV x={602} y={204} top={["1", "GND"]} bottom={["2", ""]} />
        <TwoPadV x={519} y={587} top={["1", ""]} bottom={["2", "GND"]} />
        <TwoPadV x={598} y={587} top={["1", ""]} bottom={["2", "GND"]} />
        {[299, 338, 377, 411, 448, 485].map((y) => <TwoPadH key={y} x={294} y={y} />)}
        <TwoPadH x={773} y={269} />
        <TwoPadH x={772} y={344} />
        <Led y={338} />
        <Led y={447} />
        <Qfn />

        <path d="M666 177 h21 v25 h-21z M703 177 h22 v25 h-22z M748 297 h21 v15 h-21z M778 297 h21 v15 h-21z" fill={PAD} />
        <Speckle d="M679 178 v23" />
        <Speckle d="M717 178 v23" />
        <Speckle d="M749 307.500 h19 M779 307.500 h19" />
        <g fill={INK} fontFamily={MONO} fontSize="10" textAnchor="middle" opacity="0.8">
          <text transform="translate(675 189) rotate(-90)">2</text>
          <text transform="translate(712 189) rotate(-90)">1</text>
          <text x="758" y="304" fontSize="7">1</text>
          <text x="788" y="304" fontSize="7">2</text>
        </g>
        <path d="M688.500 169.500 H666 L658.500 177 V201 L666 208.500 H688.500 M703.500 169.500 H726 L733.500 177 V201 L726 208.500 H703.500" stroke={SILK} strokeWidth="7" strokeLinecap="round" strokeLinejoin="round" />
        <path d="M767 291 H747 L742 295 V314 L747 318 H767 M780 291 H800 L805 295 V314 L800 318 H780" stroke={SILK} strokeWidth="4" strokeLinecap="round" strokeLinejoin="round" />
        <Cross x={695} y={189} />
        <Cross x={773} y={304} />

        {u1003.map(([n, x, y, net]) => (
          <g key={n}>
            <rect x={x} y={y} width="30" height="16" fill={PAD} />
            <g fill={INK} fontFamily={MONO} textAnchor="middle" opacity="0.75">
              <text x={x + 15} y={y + 7} fontSize="8">{n}</text>
              <text x={x + 15} y={y + 14} fontSize={net === "GND" ? 8 : 4}>{net}</text>
            </g>
          </g>
        ))}
        <path d="M749 372.500 H797.500 M749 455.500 H797.500" stroke={SILK} strokeWidth="7" strokeLinecap="round" />
        <circle cx="810" cy="459" r="7" fill={SILK} />
        <Cross x={772} y={414} />

        {vias.map(([x, y, r]) => (
          <circle key={`${x}-${y}`} cx={x} cy={y} r={r} fill={GOLD} stroke={r === 4 ? "#f3e3b0" : GOLD} strokeWidth="0.5" />
        ))}
        <g fill={SILK} stroke={SILK} strokeLinejoin="round" fontSize="42" fontFamily="DejaVu Sans Condensed, DejaVu Sans, sans-serif">
          {refs.map(([t, x, y]) => <text key={t} x={x} y={y}>{t}</text>)}
        </g>
      </g>
    </svg>
  );
}

const layers: [string, string][] = [
  ["B.Adhesive", "bg-[#000084]"],
  ["F.Paste", "bg-[#a5948b]"],
  ["B.Paste", "bg-[#00b4b2]"],
  ["F.Silkscreen", "bg-[#f2eda1]"],
  ["B.Silkscreen", "bg-[#e8b2a7]"],
  ["F.Mask", "bg-[repeating-conic-gradient(#542766_0_25%,#6d3f80_0_50%)] bg-[length:10px_10px]"],
  ["B.Mask", "bg-[repeating-conic-gradient(#02665c_0_25%,#167d72_0_50%)] bg-[length:10px_10px]"],
  ["User.Drawings", "bg-[#c2c2c2]"],
  ["User.Comments", "bg-[#5994dc]"],
  ["User.Eco1", "bg-[#b4dbd2]"],
  ["User.Eco2", "bg-[#d8c852]"],
  ["Edge.Cuts", "bg-[#d0d2cd]"],
];

const filters: [string, boolean][] = [
  ["All items", true], ["Locked items", false],
  ["Footprints", true], ["Text", true],
  ["Tracks", true], ["Vias", true],
  ["Pads", true], ["Graphics", true],
  ["Zones", true], ["Rule Areas", true],
  ["Dimensions", true], ["Other items", true],
];

function PanelHeader({ children }: { children: React.ReactNode }) {
  return <h2 className="h-[21px] shrink-0 bg-[#bbbbbb] pl-[3px] leading-5">{children}</h2>;
}

function SidePanel() {
  return (
    <aside className="flex w-[219px] shrink-0 flex-col">
      <PanelHeader>Appearance</PanelHeader>
      <div className="flex items-end pt-[5px] pl-px" role="tablist">
        <button type="button" role="tab" aria-selected="true" className="h-[22px] w-[50px] border border-b-0 border-[#e2e2e2] bg-[#f9f9f9] pr-1 leading-5">Layers</button>
        <button type="button" role="tab" aria-selected="false" className="h-[21px] w-[50px] border border-b-0 border-l-0 border-[#e2e2e2] leading-5">Objects</button>
        <button type="button" role="tab" aria-selected="false" className="h-[21px] w-[46px] border border-b-0 border-l-0 border-[#e2e2e2] pr-2 leading-5">Nets</button>
      </div>
      <div className="mr-0.5 ml-px border-r border-b border-[#e2e2e2] bg-[#f9f9f9] pt-0.5 pl-[3px]">
        <div className="flex h-[207px]">
          <div className="min-w-0 flex-1 overflow-hidden bg-[#f0f0f0]">
            <ul className="-mt-[5px]">
              {layers.map(([name, color]) => (
                <li key={name} className={`flex h-[18px] items-center ${name === "F.Silkscreen" ? "bg-[#e1e1e1]" : ""}`}>
                  <span className="w-4 shrink-0 pl-[5px]">
                    {name === "F.Silkscreen" && (
                      <svg width="5" height="9" viewBox="0 0 5 9"><path d="M0 0 L5 4.500 L0 9 Z" fill="#3b3bf5" /></svg>
                    )}
                  </span>
                  <span className={`h-[11px] w-[14px] shrink-0 ${color}`} />
                  <button type="button" aria-label={`Toggle ${name}`} className="ml-1.5 shrink-0">
                    <svg width="16" height="16" viewBox="0 0 16 16" fill="none">
                      <circle cx="8" cy="8" r="8" fill="#555" />
                      <path d="M1 8 Q3.800 3.600 8 3.600 T15 8 Q12.200 12.400 8 12.400 T1 8 Z" fill="#f4f4f4" />
                      <circle cx="8" cy="8" r="3.300" fill="#666" />
                      <circle cx="8" cy="8" r="2" fill="#eee" />
                      <circle cx="8" cy="8" r="0.800" fill="#666" />
                    </svg>
                  </button>
                  <span className="ml-[5px] leading-[18px]">{name}</span>
                </li>
              ))}
            </ul>
          </div>
          <div className="flex w-[17px] justify-center border-l border-white bg-[#f0f0f0] pt-10">
            <span className="h-20 w-0.5 bg-[#858585]" />
          </div>
        </div>
        <div className="pt-1 pr-1 pb-px pl-[5px]">
          <button type="button" className="flex h-[18px] w-full items-center gap-0.5 bg-white pl-[5px]">
            <svg width="5" height="8" viewBox="0 0 5 8"><path d="M0 0 L4.500 4 L0 8 Z" fill="#000" /></svg>
            Layer Display Options
          </button>
        </div>
      </div>
      <div className="flex flex-1 flex-col px-[7px] pt-3.5">
        <span className="h-4 leading-4">Presets (Ctrl+Tab):</span>
        <Combo label="Presets" value="---" className="w-[206px]" />
        <span className="mt-[3px] h-[17px] leading-4">Viewports (Shift+Tab):</span>
        <Combo label="Viewports" value="---" className="w-[206px]" />
      </div>
      <div className="h-1 shrink-0 bg-[#dcdcdc]" />
      <PanelHeader>Selection Filter</PanelHeader>
      <div className="grid grid-cols-[92px_1fr] pt-[5px] pb-1 pl-[5px]">
        {filters.map(([name, on]) => (
          <label key={name} className="relative flex h-[15px] items-center gap-[3px] leading-[15px]">
            <input
              type="checkbox"
              defaultChecked={on}
              className="peer size-[13px] shrink-0 appearance-none rounded-[3px] border border-[#6b6b6b] bg-[#f8f8f8] checked:border-[#005fb8] checked:bg-[#005fb8]"
            />
            <svg className="pointer-events-none absolute left-0 hidden peer-checked:block" width="13" height="13" viewBox="0 0 13 13" fill="none">
              <path d="M3 6.500 L5.500 9 L10 4.500" stroke="#fff" />
            </svg>
            {name}
          </label>
        ))}
      </div>
    </aside>
  );
}

const menus = ["File", "Edit", "View", "Place", "Route", "Inspect", "Tools", "Preferences", "Help"];
const stats: [string, string][] = [["Pads", "1398"], ["Vias", "249"], ["Track Segments", "3533"], ["Nets", "562"], ["Unrouted", "0"]];

export default function App() {
  return (
    <div className="flex h-screen flex-col overflow-hidden bg-[#f0f0f0] font-['Noto_Sans','Open_Sans',sans-serif] text-[11px] text-black">
      <header className="flex h-[23px] shrink-0 items-center bg-[#f3f3f3] pl-0.5">
        <svg width="16" height="16" viewBox="0 0 24 24" fill="none">
          {board}
          <rect x="0.500" y="0.500" width="23" height="23" rx="2.500" stroke="#153f18" />
          <circle cx="5" cy="8" r="3" fill="#f29100" />
          <circle cx="5" cy="17" r="3" fill="#f29100" />
          <circle cx="19" cy="18" r="3.500" fill="#f29100" />
        </svg>
        <h1 className="ml-1.5 flex-1">WASP — PCB Editor</h1>
        <button type="button" aria-label="Minimize" className="grid h-full w-[46px] place-items-center">
          <svg width="10" height="10" viewBox="0 0 10 10"><path d="M0 5.500 H10" stroke="#000" /></svg>
        </button>
        <button type="button" aria-label="Restore" className="grid h-full w-[46px] place-items-center">
          <svg width="11" height="11" viewBox="0 0 11 11" fill="none" stroke="#000">
            <rect x="0.500" y="2.500" width="7" height="8" rx="1.500" />
            <path d="M2.500 1.500 Q2.500 0.500 4 0.500 H8 Q9.500 0.500 9.500 2 V7 Q9.500 8.500 8.500 8.500" />
          </svg>
        </button>
        <button type="button" aria-label="Close" className="grid h-full w-[46px] place-items-center">
          <svg width="11" height="11" viewBox="0 0 11 11" stroke="#000"><path d="M0.500 0.500 L10.500 10.500 M10.500 0.500 L0.500 10.500" /></svg>
        </button>
      </header>

      <nav className="flex h-[18px] shrink-0 bg-white">
        {menus.map((m) => (
          <button key={m} type="button" className="px-[7px] leading-5">{m}</button>
        ))}
      </nav>

      <div className="flex h-[38px] shrink-0 items-center pl-1" role="toolbar" aria-label="Main">
        {mainTools.map((t, i) => (t ? <ToolButton key={i} tool={t} /> : <VSep key={i} />))}
      </div>

      <div className="flex h-[32px] shrink-0 items-start pl-[5px]" role="toolbar" aria-label="Options">
        <Combo label="Track width" value="Track: use netclass width" className="mt-[3px] w-[177px]" />
        <div className="-mt-px ml-px"><ToolButton tool={["autoTrack", "Use existing track width", true]} /></div>
        <div className="mt-[3px] flex">
          <VSep />
          <Combo label="Via size" value="Via: use netclass sizes" className="ml-px w-[253px]" />
          <VSep />
          <Combo label="Active layer" value="F.Silkscreen" className="ml-0.5 w-[137px]" swatch="bg-[#f2eda1]" strong />
          <button type="button" aria-label="Layer pair" className="ml-[5px] size-6"><Svg>{icons.layerPair}</Svg></button>
          <span className="w-1" />
          <VSep />
          <Combo label="Grid" value="0,5000 mm (0,0197 in)" className="ml-px w-[149px]" />
          <VSep />
          <Combo label="Zoom" value="Zoom 8,00" className="ml-0.5 w-[96px]" />
        </div>
      </div>

      <div className="flex min-h-0 flex-1">
        <div className="w-[34px] shrink-0"><ToolColumn tools={leftTools} /></div>
        <main className="relative min-w-0 flex-1 border border-[#a5a5a5] border-r-[#d0d0d0]"><Board /></main>
        <div className="w-[34px] shrink-0"><ToolColumn tools={rightTools} /></div>
        <div className="w-1 shrink-0 bg-[#dcdcdc]" />
        <SidePanel />
      </div>

      <footer className="h-[28px] shrink-0 pt-px">
        <dl className="flex gap-[30px] pl-[11px]">
          {stats.map(([k, v]) => (
            <div key={k}>
              <dt className="leading-[15px]">{k}</dt>
              <dd className="h-3 leading-3">{v}</dd>
            </div>
          ))}
        </dl>
      </footer>
    </div>
  );
}
